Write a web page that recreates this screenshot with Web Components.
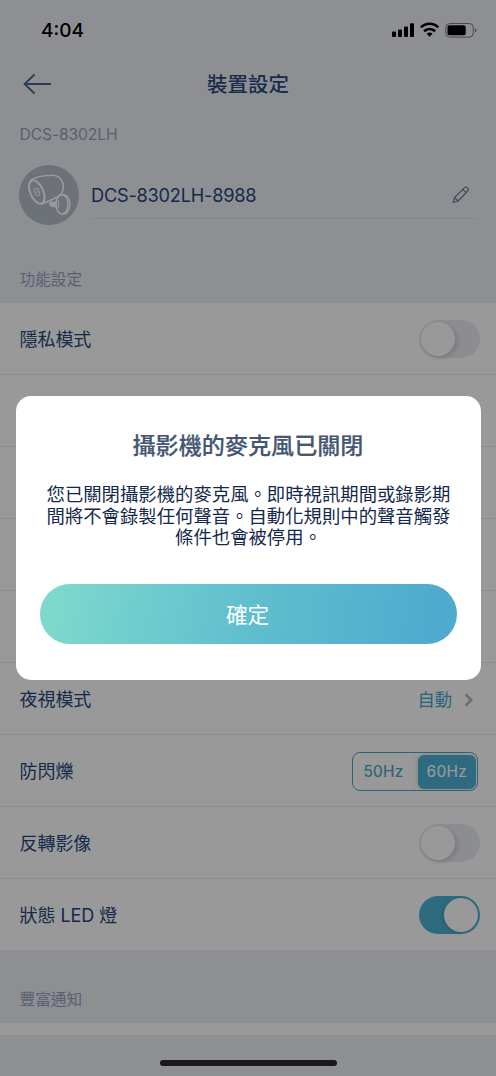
<!DOCTYPE html>
<html lang="zh-Hant">
<head>
<meta charset="utf-8">
<title>裝置設定</title>
<style>
html,body{margin:0;padding:0}
body{width:496px;height:1076px;overflow:hidden;background:#8e8f93;font-family:"Inter","Noto Sans CJK TC",sans-serif;color:#14294a}
</style>
</head>
<body>
<settings-screen></settings-screen>
<script>
function define(name, html) {
  const template = document.createElement('template');
  template.innerHTML = html;
  customElements.define(name, class extends HTMLElement {
    constructor() {
      super();
      this.attachShadow({ mode: 'open' }).append(template.content.cloneNode(true));
    }
  });
}

define('status-bar', `
<style>
:host{display:flex;height:60px;box-sizing:border-box;padding:0 19px 0 41px;align-items:center;justify-content:space-between;color:#000}
time{font-size:19px;font-weight:500;line-height:24px;letter-spacing:0;padding-top:1px}
svg{display:block}
</style>
<time>4:04</time>
<svg width="86" height="18" viewBox="0 0 86 18">
  <g fill="#000"><rect x="1" y="10.5" width="4" height="5.5" rx="1"/><rect x="7" y="8.5" width="4" height="7.5" rx="1"/><rect x="13" y="5.5" width="4" height="10.5" rx="1"/><rect x="19" y="2.3" width="4" height="13.7" rx="1"/></g>
  <g fill="none" stroke="#000" stroke-width="2.7"><path d="M30 6.4a12 12 0 0 1 17.2 0"/><path d="M33.1 10.3a7.7 7.7 0 0 1 11 0"/></g>
  <path d="M35.7 12.7a4.3 4.3 0 0 1 5.8 0l-2.9 3.1z"/>
  <rect x="54.8" y="2.5" width="27.5" height="13.6" rx="4" fill="none" stroke="#48494c"/>
  <rect x="56.5" y="4.3" width="18.2" height="10" rx="2" fill="#000"/>
  <path d="M84 7.3v4q1.4-.6 1.4-2t-1.4-2z" fill="#48494c"/>
</svg>`);

define('nav-header', `
<style>
:host{display:grid;grid-template-columns:60px 1fr 60px;height:48px;align-items:center;color:#172b4b}
svg{display:block;margin-left:22px}
h1{margin:0;padding-top:2px;text-align:center;font-size:20.5px;line-height:28px;font-weight:500}
</style>
<svg width="30" height="22" viewBox="0 0 30 22" fill="none" stroke="#2b3c59" stroke-width="1.8"><path d="M2 11h27M12.5 1.5 2.5 11l10 9.5"/></svg>
<h1><slot></slot></h1>`);

define('section-label', `
<style>:host{display:block;padding-left:19.5px;font-size:15.7px;line-height:22px;color:#596171}</style><slot></slot>`);

define('camera-icon', `
<style>:host{display:block;width:60px;height:60px;border-radius:50%;background:#6d7178}svg{display:block}</style>
<svg width="60" height="60" viewBox="0 0 60 60" fill="none" stroke="#999a9c" stroke-width="1.5" stroke-linejoin="round">
<path d="M11 15.5q7-4.5 21-5.2c8-.6 12.8 5.5 12.2 12.2q-.3 6-4.2 8.5-7 4.2-17 8"/>
<ellipse cx="17.8" cy="27" rx="6.4" ry="12.6" transform="rotate(-24 17.8 27)" stroke-width="2"/>
<ellipse cx="18" cy="27" rx="2.3" ry="3.8" transform="rotate(-20 18 27)" stroke-width="1.1"/>
<ellipse cx="18" cy="27" rx=".4" ry=".8" stroke-width=".9"/>
<path d="M30.5 37.5q.5 4 3.5 4h3v-4h-4l-.5-1" fill="#999a9c"/>
<ellipse cx="43" cy="39.4" rx="6" ry="9.6"/>
<path d="M43 29.8h2.5c3.3.5 5.7 5 5.3 10.2-.4 5.5-3.2 9.1-6 9h-2"/>
<path d="M38.5 35q2.5 4 .2 8.5" stroke-width="1.1"/>
</svg>`);

define('device-card', `
<style>
:host{display:flex;gap:12px;padding:10px 19px 0;height:70px;box-sizing:border-box;margin-top:9px}
.name{flex:1;display:flex;height:54px;padding-right:7px;box-sizing:border-box;border-bottom:1px solid #85868b;align-items:center;justify-content:space-between;font-size:18.2px;letter-spacing:-.22px;padding-top:7px}
svg{display:block}
</style>
<camera-icon></camera-icon>
<div class="name"><span><slot></slot></span>
<svg width="20" height="20" viewBox="0 0 20 20" fill="none" stroke="#3c4860" stroke-width="1.1" stroke-linejoin="round"><path d="M3.2 17.5 4.5 12.5 14.5 2.6q1.4-1.2 2.9.3 1.7 1.5.4 3.1L8 16zM4.5 12.5 8 16M12.8 4.3l3.5 3.6"/></svg></div>`);

define('setting-row', `
<style>
:host{display:flex;height:72px;box-sizing:border-box;padding:0 16px 0 19.5px;align-items:center;justify-content:space-between;background:#999;border-bottom:1px solid #8c8c8d;font-size:18px;line-height:26px;letter-spacing:-.05px}
:host(:last-of-type){height:71px;border-bottom:0}
.label{padding-top:3px}
</style>
<span class="label"><slot></slot></span><slot name="control"></slot>`);

define('toggle-switch', `
<style>
:host{display:flex;width:61px;height:38px;box-sizing:border-box;padding:2px;border-radius:19px;background:#8c8d90}
i{width:34px;height:34px;border-radius:50%;background:#999;box-shadow:2px 2px 5px rgba(0,0,0,.14)}
:host([on]){background:#2e6b80;justify-content:flex-end}
:host([on]) i{box-shadow:-2px 1px 4px rgba(0,0,0,.12)}
</style><i></i>`);

define('value-link', `
<style>
:host{display:flex;align-items:center;gap:12px;color:#27647a;padding:2px 6px 0 0;font-size:17.3px}
svg{display:block}
</style><slot></slot>
<svg width="10" height="14" viewBox="0 0 10 14" fill="none" stroke="#6c6f76" stroke-width="2.5"><path d="m1.7 1.5 5.6 5.5-5.6 5.5"/></svg>`);

define('segment-control', `
<style>
:host{display:grid;grid-template-columns:64px 58px;width:126px;height:39px;box-sizing:border-box;border:1.5px solid #2b6478;border-radius:8px;padding:1px;margin:2px 2.5px 0 0;font-size:15.4px;letter-spacing:.3px;color:#2b6478}
span{display:flex;align-items:center;justify-content:center;padding-top:1px}
.a{padding-right:4px;-webkit-text-stroke:.2px currentColor}
.b{background:#2e6b80;color:#999;border-radius:6px;box-shadow:-2px 0 4px rgba(0,0,0,.1);margin:.5px 0 .5px .5px;-webkit-text-stroke:.2px currentColor}
</style><span class="a">50Hz</span><span class="b">60Hz</span>`);

define('action-button', `
<style>
:host{display:block}
button{display:block;width:100%;height:60px;border:0;padding:0 2px 0 0;box-sizing:border-box;border-radius:30px;background:linear-gradient(100deg,#7dd8cd 4%,#61bfce 49%,#4faace 94%);color:#fff;font:21.6px/60px "Noto Sans CJK TC",sans-serif}
</style><button><slot></slot></button>`);

define('alert-dialog', `
<style>
:host{position:absolute;left:16px;top:396px;width:465px;height:284px;box-sizing:border-box;padding:34px 24px 36px;border-radius:15px;background:#fff;display:flex;flex-direction:column}
h2{margin:0 1px 0 0;text-align:center;font-size:23.1px;line-height:32px;font-weight:500;color:#455673;-webkit-text-stroke:.2px currentColor}
p{margin:22px 0 0;text-align:center;font-size:18.36px;line-height:21.5px;white-space:nowrap;color:#14294a}
action-button{margin-top:auto}
</style>
<h2><slot name="title"></slot></h2><p><slot></slot></p><action-button>確定</action-button>`);

define('home-indicator', `
<style>:host{position:absolute;left:160px;bottom:10px;width:177px;height:6px;border-radius:3px;background:#19191a}</style>`);

define('settings-screen', `
<style>
:host{display:block;position:relative;width:496px;height:1076px;overflow:hidden}
.model{margin-top:16px;letter-spacing:-.15px}
.features{margin-top:44px}
.rows{margin-top:12px}
.rich{margin-top:39px}
.strip{height:12px;margin-top:12px;background:#999}
</style>
<status-bar></status-bar>
<nav-header>裝置設定</nav-header>
<section-label class="model">DCS-8302LH</section-label>
<device-card>DCS-8302LH-8988</device-card>
<section-label class="features">功能設定</section-label>
<div class="rows">
<setting-row>隱私模式<toggle-switch slot="control"></toggle-switch></setting-row>
<setting-row></setting-row><setting-row></setting-row><setting-row></setting-row><setting-row></setting-row>
<setting-row>夜視模式<value-link slot="control">自動</value-link></setting-row>
<setting-row>防閃爍<segment-control slot="control"></segment-control></setting-row>
<setting-row>反轉影像<toggle-switch slot="control"></toggle-switch></setting-row>
<setting-row>狀態 LED 燈<toggle-switch slot="control" on></toggle-switch></setting-row>
</div>
<section-label class="rich">豐富通知</section-label>
<div class="strip"></div>
<alert-dialog><span slot="title">攝影機的麥克風已關閉</span>您已關閉攝影機的麥克風。即時視訊期間或錄影期<br>間將不會錄製任何聲音。自動化規則中的聲音觸發<br>條件也會被停用。</alert-dialog>
<home-indicator></home-indicator>`);
</script>
</body>
</html>
